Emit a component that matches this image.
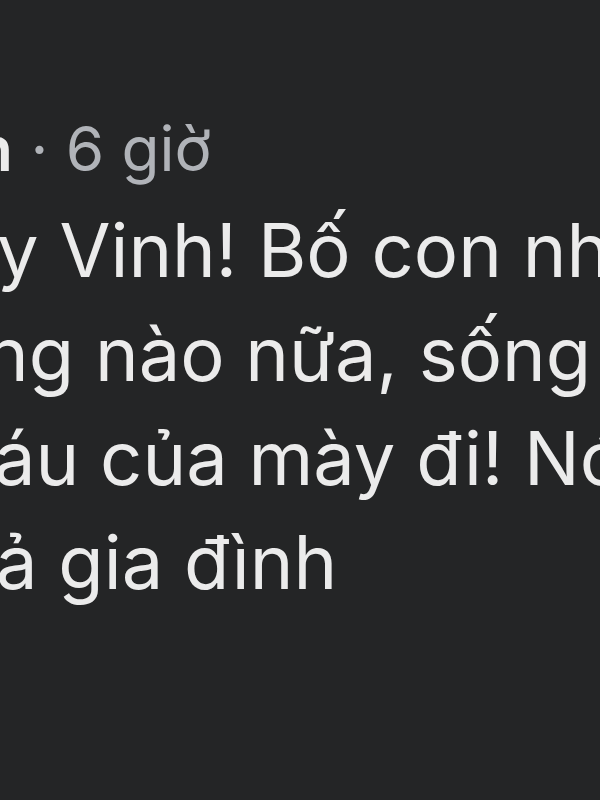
export default function App() {
  return (
    <div className="w-[600px] h-[800px] overflow-hidden bg-[#242526] pt-[109px] font-['Inter',sans-serif]">
      <div className="whitespace-nowrap text-[62px] leading-[80px] -ml-[25px]">
        <span className="font-semibold text-[#ebebeb]">n</span>
        <span className="text-[#b0b3b8]"> · 6 giờ</span>
      </div>
      <div className="mt-[9px] whitespace-nowrap text-[74px] leading-[104px] text-[#ebebeb]">
        <div className="-ml-[3px]">y Vinh! Bố con nhau</div>
        <div className="-ml-[15px]">ng nào nữa, sống</div>
        <div className="-ml-[6px]">áu của mày đi! Nó</div>
        <div className="-ml-[4px]">ả gia đình</div>
      </div>
    </div>
  );
}
